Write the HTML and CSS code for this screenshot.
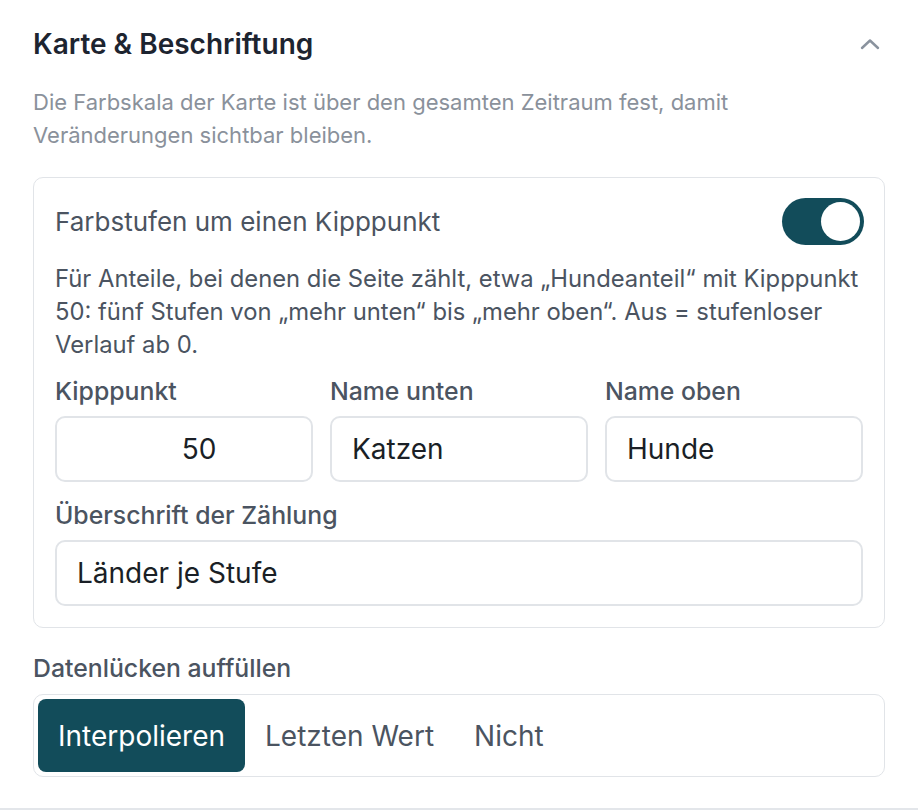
FILE: index.html
```html
<!DOCTYPE html>
<html lang="de">
<head>
<meta charset="utf-8">
<link rel="stylesheet" href="styles.css">
</head>
<body>
<section class="panel">
  <div class="panel-head">
    <h2 class="panel-title">Karte &amp; Beschriftung</h2>
    <svg class="chevron" width="22" height="14" viewBox="0 0 22 14"><path d="M3 11 L11 3.5 L19 11" fill="none" stroke="#8a939e" stroke-width="2.4" stroke-linecap="round" stroke-linejoin="round"/></svg>
  </div>
  <p class="panel-desc">Die Farbskala der Karte ist über den gesamten Zeitraum fest, damit Veränderungen sichtbar bleiben.</p>

  <div class="card">
    <div class="toggle-row">
      <span class="toggle-label">Farbstufen um einen Kipppunkt</span>
      <span class="toggle on"><span class="knob"></span></span>
    </div>
    <p class="card-text">Für Anteile, bei denen die Seite zählt, etwa „Hundeanteil“ mit Kipppunkt 50: fünf Stufen von „mehr unten“ bis „mehr oben“. Aus = stufenloser Verlauf ab 0.</p>
    <div class="field-grid">
      <label class="field">
        <span class="field-label">Kipppunkt</span>
        <span class="input number">50</span>
      </label>
      <label class="field">
        <span class="field-label">Name unten</span>
        <span class="input">Katzen</span>
      </label>
      <label class="field">
        <span class="field-label">Name oben</span>
        <span class="input">Hunde</span>
      </label>
    </div>
    <label class="field wide">
      <span class="field-label">Überschrift der Zählung</span>
      <span class="input">Länder je Stufe</span>
    </label>
  </div>

  <div class="group-label">Datenlücken auffüllen</div>
  <div class="segmented">
    <span class="seg active">Interpolieren</span>
    <span class="seg">Letzten Wert</span>
    <span class="seg">Nicht</span>
  </div>
</section>
</body>
</html>
```
FILE: styles.css
```css
* { box-sizing: border-box; }
html, body { margin: 0; padding: 0; background: #fff; }
body {
  font-family: Inter, "Noto Sans", "Liberation Sans", sans-serif;
  width: 918px;
  height: 812px;
  overflow: hidden;
}
.panel {
  padding: 24px 33px 31px 33px;
  border-bottom: 2px solid #e3e6ea;
}
.panel-head {
  display: flex;
  align-items: center;
  justify-content: space-between;
  height: 40px;
}
.panel-title {
  margin: 0;
  font-size: 28px;
  font-weight: 600;
  color: #1d2430;
}
.chevron { margin-right: 4px; }
.panel-desc {
  margin: 22px 0 0 0;
  font-size: 22px;
  line-height: 33px;
  color: #8a919b;
  padding-right: 100px;
}
.card {
  margin-top: 25px;
  border: 1px solid #e1e4e8;
  border-radius: 10px;
  padding: 20px 21px 21px 21px;
}
.toggle-row {
  display: flex;
  align-items: center;
  justify-content: space-between;
  height: 47px;
}
.toggle-label {
  font-size: 26px;
  color: #4b5461;
}
.toggle {
  width: 82px;
  height: 47px;
  border-radius: 24px;
  background: #124c5a;
  display: flex;
  align-items: center;
  justify-content: flex-end;
  padding: 4px;
  margin-right: -1px;
}
.knob {
  width: 39px;
  height: 39px;
  border-radius: 50%;
  background: #fff;
}
.card-text {
  margin: 17px 0 0 0;
  font-size: 23.8px;
  line-height: 33px;
  color: #4b5461;
}
.field-grid {
  display: grid;
  grid-template-columns: 1fr 1fr 1fr;
  column-gap: 17px;
  margin-top: 15px;
}
.field {
  display: flex;
  flex-direction: column;
}
.field.wide { margin-top: 18px; }
.field-label {
  font-size: 24.8px;
  line-height: 30px;
  font-weight: 500;
  color: #4b5461;
  margin-bottom: 10px;
}
.input {
  display: flex;
  align-items: center;
  height: 66px;
  border: 2px solid #e1e4e8;
  border-radius: 10px;
  padding: 0 20px;
  font-size: 28px;
  color: #1a1f26;
}
.input.number {
  justify-content: center;
  padding-left: 50px;
}
.group-label {
  margin-top: 25px;
  font-size: 24.8px;
  line-height: 30px;
  font-weight: 500;
  color: #4b5461;
}
.segmented {
  margin-top: 11px;
  display: flex;
  border: 1px solid #e1e4e8;
  border-radius: 10px;
  padding: 4px;
  height: 83px;
}
.seg {
  display: flex;
  align-items: center;
  padding: 0 20px;
  font-size: 28px;
  color: #4b5461;
  border-radius: 8px;
}
.seg.active {
  background: #124c5a;
  color: #fff;
}
```
